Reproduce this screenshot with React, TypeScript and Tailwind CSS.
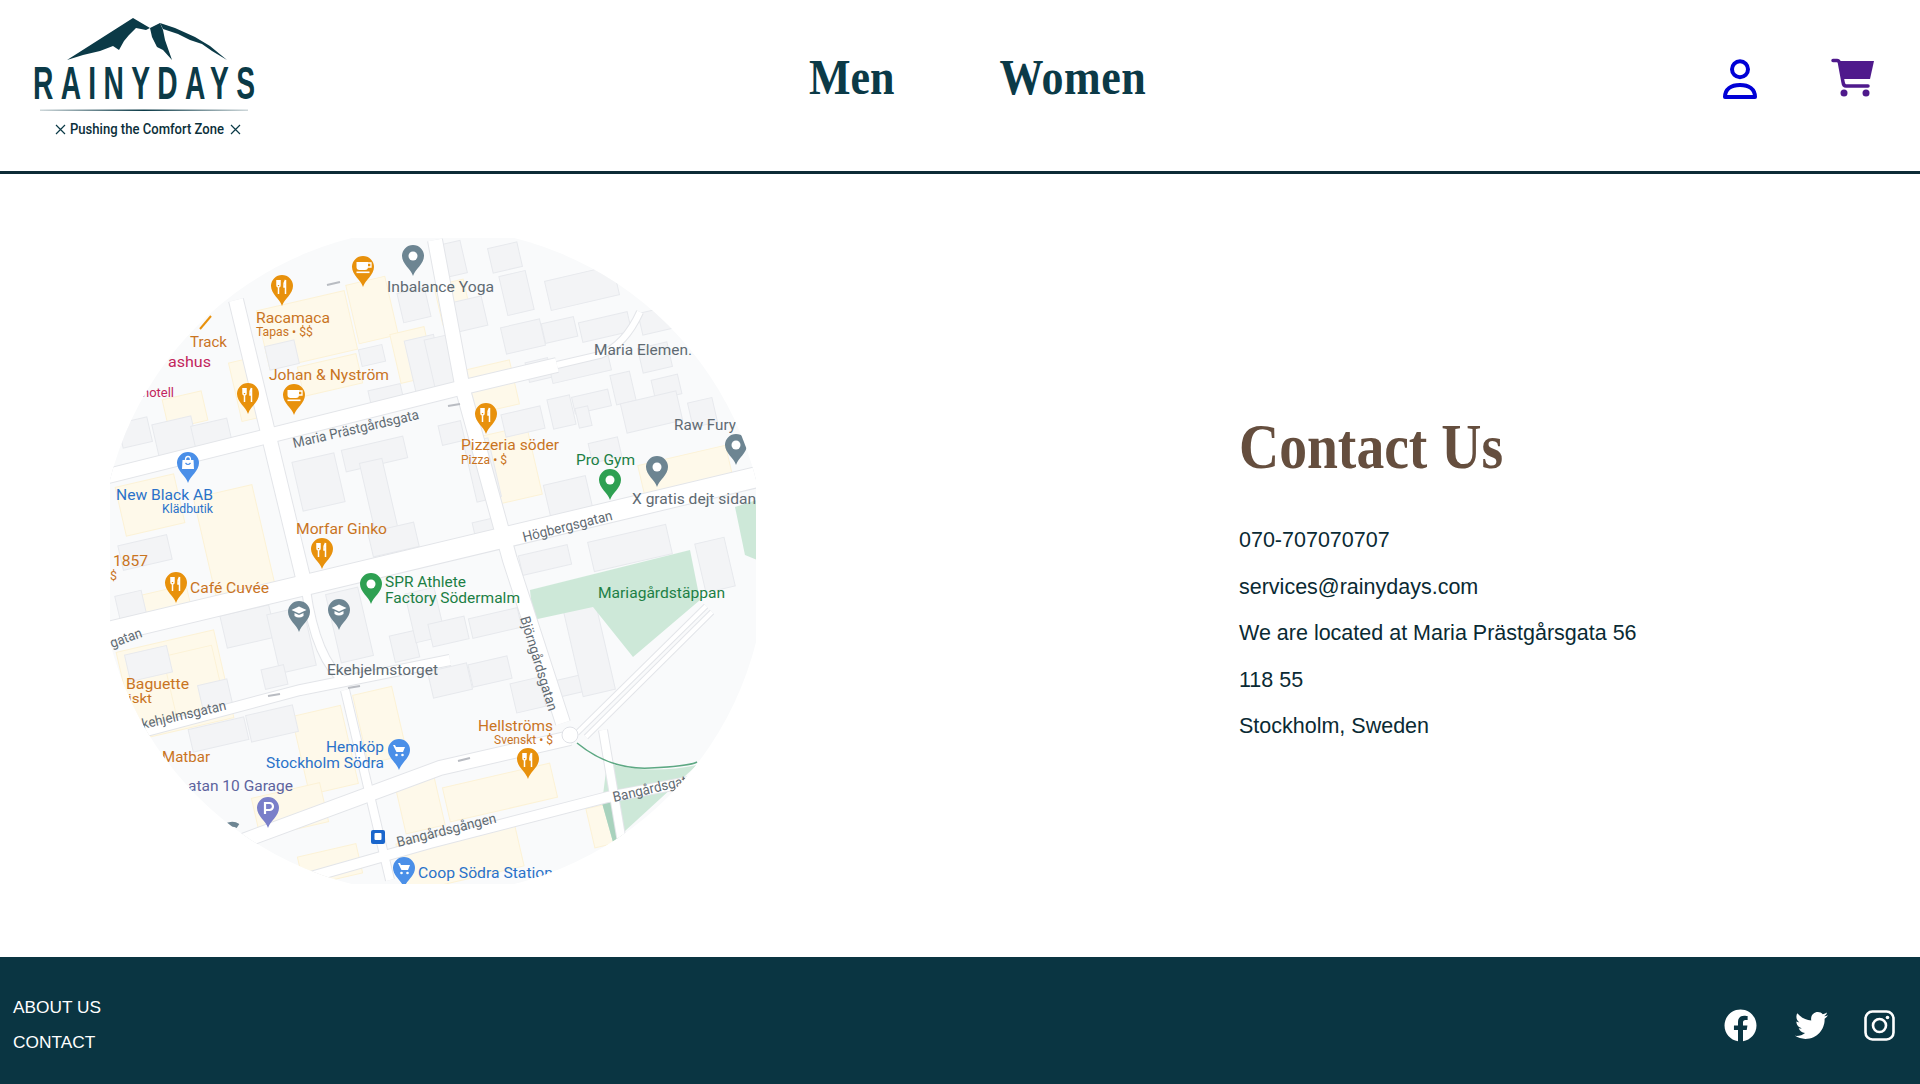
import { FaFacebook, FaTwitter } from 'react-icons/fa';

const ORANGE = '#c9741f';
const GREY = '#5f6a72';
const BLUE = '#2a72c9';
const GREEN = '#1c7f45';
const PINK = '#c2255c';

// [x, y, w, h], each turned -13deg around its own centre
const yellow = [
  [262, 300, 90, 60], [352, 280, 40, 60], [300, 360, 60, 30], [395, 330, 35, 50], [438, 282, 30, 40],
  [465, 365, 50, 45], [490, 430, 45, 70], [120, 480, 60, 50], [205, 490, 60, 110], [140, 590, 50, 30],
  [125, 640, 100, 90], [170, 650, 50, 70], [300, 710, 50, 80], [360, 690, 40, 70], [255, 790, 70, 40],
  [400, 780, 40, 50], [445, 775, 110, 35], [400, 830, 120, 50], [590, 805, 30, 40], [640, 455, 90, 30], [300, 850, 60, 30],
  [165, 395, 40, 30], [235, 360, 20, 60],
];
const buildings = [
  [267, 343, 30, 24], [155, 420, 40, 33], [193, 422, 37, 25], [297, 457, 43, 50], [343, 443, 63, 22],
  [367, 460, 23, 70], [370, 527, 47, 25], [370, 387, 33, 22], [410, 337, 30, 55], [360, 347, 24, 17],
  [430, 337, 22, 55], [437, 243, 27, 33], [503, 273, 27, 40], [547, 273, 70, 30], [503, 323, 40, 27],
  [543, 320, 33, 20], [580, 317, 50, 20], [527, 360, 23, 20], [550, 357, 60, 20], [613, 373, 20, 30],
  [653, 377, 27, 20], [623, 397, 57, 30], [503, 410, 40, 23], [550, 397, 23, 30], [573, 393, 37, 17],
  [577, 407, 13, 20], [547, 480, 43, 37], [440, 423, 23, 20], [590, 533, 80, 30], [520, 550, 50, 20],
  [223, 610, 50, 33], [273, 610, 37, 60], [127, 650, 43, 27], [117, 593, 27, 23], [263, 667, 23, 20],
  [190, 723, 57, 23], [248, 710, 48, 27], [333, 590, 33, 70], [392, 633, 25, 27], [410, 590, 30, 50],
  [430, 620, 37, 23], [470, 613, 50, 20], [470, 660, 40, 23], [430, 667, 40, 27], [513, 680, 30, 30],
  [557, 677, 30, 17], [573, 607, 33, 87], [700, 540, 30, 50], [470, 440, 25, 60], [120, 540, 50, 25],
  [445, 300, 40, 30], [490, 245, 30, 25], [640, 345, 30, 25], [690, 400, 25, 25], [590, 440, 30, 20],
  [475, 520, 22, 28], [120, 420, 30, 25], [200, 682, 30, 25], [400, 290, 28, 30], [640, 310, 30, 22],
];
const roads = [
  { d: 'M100 478 L460 388 L557 365', w: 14 },
  { d: 'M557 365 L600 355 Q625 345 640 312', w: 6 },
  { d: 'M236 300 L306 590', w: 14 },
  { d: 'M435 240 L463 390 L510 560 L563 723', w: 14 },
  { d: 'M100 634 L770 474', w: 20 },
  { d: 'M120 738 L300 690 L450 660', w: 10 },
  { d: 'M240 842 L440 768 L570 738', w: 14 },
  { d: 'M300 880 L430 843 L608 797 L700 780', w: 10 },
  { d: 'M577 733 L706 606', w: 4 },
  { d: 'M586 737 L712 612', w: 4 },
  { d: 'M603 730 L625 860', w: 8 },
  { d: 'M345 690 L390 880', w: 8 },
  { d: 'M306 590 Q316 660 345 682', w: 8 },
];

type Label = { t: string; x: number; y: number; w: number; c: string; s?: number; r?: number };
const labels: Label[] = [
  { t: 'Inbalance Yoga', x: 387, y: 292, w: 107, c: GREY },
  { t: 'Racamaca', x: 256, y: 323, w: 74, c: ORANGE },
  { t: 'Tapas • $$', x: 256, y: 336, w: 57, c: ORANGE, s: 12 },
  { t: 'Track', x: 190, y: 347, w: 37, c: ORANGE },
  { t: 'ashus', x: 168, y: 367, w: 43, c: PINK },
  { t: 'hotell', x: 142, y: 397, w: 32, c: PINK, s: 12 },
  { t: 'Johan & Nyström', x: 269, y: 380, w: 120, c: ORANGE },
  { t: 'New Black AB', x: 116, y: 500, w: 97, c: BLUE },
  { t: 'Klädbutik', x: 162, y: 513, w: 51, c: BLUE, s: 12 },
  { t: 'Morfar Ginko', x: 296, y: 534, w: 91, c: ORANGE },
  { t: '1857', x: 113, y: 566, w: 35, c: ORANGE },
  { t: '$', x: 110, y: 580, w: 7, c: ORANGE, s: 12 },
  { t: 'Maria Elemen.', x: 594, y: 355, w: 98, c: GREY },
  { t: 'Raw Fury', x: 674, y: 430, w: 62, c: GREY },
  { t: 'Pizzeria söder', x: 461, y: 450, w: 98, c: ORANGE },
  { t: 'Pizza • $', x: 461, y: 464, w: 46, c: ORANGE, s: 12 },
  { t: 'Pro Gym', x: 576, y: 465, w: 59, c: GREEN },
  { t: 'X gratis dejt sidan', x: 632, y: 504, w: 124, c: GREY },
  { t: 'Café Cuvée', x: 190, y: 593, w: 79, c: ORANGE },
  { t: 'SPR Athlete', x: 385, y: 587, w: 81, c: GREEN },
  { t: 'Factory Södermalm', x: 385, y: 603, w: 135, c: GREEN },
  { t: 'Baguette', x: 126, y: 689, w: 63, c: ORANGE },
  { t: 'iskt', x: 128, y: 703, w: 24, c: ORANGE, s: 12 },
  { t: 'Ekehjelmstorget', x: 327, y: 675, w: 111, c: GREY },
  { t: 'Matbar', x: 162, y: 762, w: 48, c: ORANGE },
  { t: 'Hemköp', x: 326, y: 752, w: 58, c: BLUE },
  { t: 'Stockholm Södra', x: 266, y: 768, w: 118, c: BLUE },
  { t: 'atan 10 Garage', x: 188, y: 791, w: 105, c: '#5d639e' },
  { t: 'Coop Södra Station', x: 418, y: 878, w: 135, c: BLUE },
  { t: 'Mariagårdstäppan', x: 598, y: 598, w: 127, c: GREEN },
  { t: 'Hellströms', x: 478, y: 731, w: 75, c: ORANGE },
  { t: 'Svenskt • $', x: 494, y: 744, w: 59, c: ORANGE, s: 12 },
  { t: 'Maria Prästgårdsgata', x: 294, y: 448, w: 129, c: GREY, s: 14, r: -13 },
  { t: 'Högbergsgatan', x: 524, y: 542, w: 92, c: GREY, s: 14, r: -14 },
  { t: 'gatan', x: 112, y: 648, w: 33, c: GREY, s: 14, r: -20 },
  { t: 'kehjelmsgatan', x: 143, y: 729, w: 86, c: GREY, s: 14, r: -13 },
  { t: 'Bangårdsgången', x: 398, y: 847, w: 102, c: GREY, s: 14, r: -14 },
  { t: 'Björngårdsgatan', x: 520, y: 618, w: 98, c: GREY, s: 14, r: 73 },
  { t: 'Bangårdsgatan', x: 614, y: 802, w: 90, c: GREY, s: 14, r: -13 },
];

const pinColor = { orange: '#e8910c', grey: '#6d8592', green: '#2ea052', blue: '#4a8fe8', purple: '#7a7fc9' };

function Pin({ x, y, color, glyph }: { x: number; y: number; color: string; glyph: string }) {
  return (
    <g transform={`translate(${x} ${y})`}>
      <path d="M0 31 C-2 24 -11 19 -11 11 A11 11 0 0 1 11 11 C11 19 2 24 0 31Z" fill={color} />
      {glyph === 'dot' && <circle cx="0" cy="11" r="4.5" fill="#fff" />}
      {glyph === 'fork' && (
        <path d="M-5 5 V10 Q-5 12 -3.5 12 V19 M-3.5 5 V10 M-2 5 V10 Q-2 12 -3.5 12 M3.5 5 Q1.5 8 2 12 H3.5 V19 M3.5 5 V12" fill="none" stroke="#fff" strokeWidth="1.5" />
      )}
      {glyph === 'cup' && (
        <g fill="#fff">
          <path d="M-6.5 6 H5 V11 Q5 14 2 14 H-3.5 Q-6.5 14 -6.5 11Z" />
          <path d="M5 7 H8 V11 H5" fill="none" stroke="#fff" strokeWidth="1.3" />
          <rect x="-6.5" y="15.5" width="13" height="1.6" />
        </g>
      )}
      {glyph === 'cart' && (
        <g fill="#fff">
          <path d="M-6 6 H-4 L-3 8 H6 L4 13 H-2.5 Z" />
          <circle cx="-2.5" cy="16" r="1.3" />
          <circle cx="3.5" cy="16" r="1.3" />
        </g>
      )}
      {glyph === 'bag' && (
        <g>
          <path d="M-5.5 8 H5.5 L6 17 H-6Z" fill="#fff" />
          <path d="M-2.5 8 Q-2.5 4.5 0 4.5 T2.5 8" fill="none" stroke="#fff" strokeWidth="1.3" />
          <path d="M-2.5 11 Q0 14 2.5 11" fill="none" stroke={color} strokeWidth="1.2" />
        </g>
      )}
      {glyph === 'cap' && (
        <g fill="#fff">
          <path d="M-7.5 9 L0 5.5 L7.5 9 L0 12.5Z" />
          <path d="M-4.5 12 L0 14 L4.5 12 V15 Q0 18 -4.5 15Z" />
        </g>
      )}
      {glyph === 'P' && (
        <path d="M-3 17 V6 H1.5 A3.3 3.3 0 0 1 1.5 13 H-3" fill="none" stroke="#fff" strokeWidth="2.2" />
      )}
    </g>
  );
}

function MapPicture() {
  return (
    <svg viewBox="110 238 646 646" className="w-[646px] h-[646px] block">
      <defs>
        <clipPath id="round-map">
          <circle cx="433" cy="561" r="333" />
        </clipPath>
      </defs>
      <g clipPath="url(#round-map)">
        <rect x="100" y="220" width="670" height="680" fill="#f9fafb" />
        {yellow.map(([x, y, w, h], i) => (
          <rect key={i} x={x} y={y} width={w} height={h} fill="#fef9ea" stroke="#fcf2d6" transform={`rotate(-13 ${x + w / 2} ${y + h / 2})`} />
        ))}
        {buildings.map(([x, y, w, h], i) => (
          <rect key={i} x={x} y={y} width={w} height={h} fill="#f3f4f6" stroke="#e7e9ed" transform={`rotate(-13 ${x + w / 2} ${y + h / 2})`} />
        ))}
        <path d="M530 590 L690 550 L700 600 L633 657 L593 607 L533 620Z" fill="#cde8d8" />
        <path d="M735 507 L757 500 L757 560 L745 555Z" fill="#cde8d8" />
        <path d="M607 763 Q650 775 697 765 L613 842 L602 803Z" fill="#cde8d8" />
        <path d="M602 803 L615 802 L622 835 L613 842Z" fill="#a8d2bd" />
        {roads.map((r, i) => (
          <path key={i} d={r.d} fill="none" stroke="#e3e5e9" strokeWidth={r.w + 2} />
        ))}
        {roads.map((r, i) => (
          <path key={i} d={r.d} fill="none" stroke="#fff" strokeWidth={r.w} />
        ))}
        <circle cx="570" cy="735" r="8" fill="#fff" stroke="#dfe1e6" />
        <path d="M577 743 Q610 770 650 768 T697 762" fill="none" stroke="#5da883" strokeWidth="1.5" />
        <g stroke="#b9bcc2" strokeWidth="2" fill="none">
          <path d="M327 285 L340 282" />
          <path d="M448 406 L460 404" />
          <path d="M268 696 L280 694" />
          <path d="M348 688 L360 686" />
          <path d="M458 761 L470 758" />
        </g>
        <path d="M200 329 L211 316" stroke="#e8910c" strokeWidth="2" fill="none" />
        <g className="font-['Roboto',sans-serif]">
          {labels.map((l) => (
            <text
              key={l.t}
              x={l.x}
              y={l.y}
              fontSize={l.s ?? 15}
              fill={l.c}
              textLength={l.w}
              lengthAdjust="spacingAndGlyphs"
              transform={l.r ? `rotate(${l.r} ${l.x} ${l.y})` : undefined}
            >
              {l.t}
            </text>
          ))}
        </g>
        <Pin x={282} y={275} color={pinColor.orange} glyph="fork" />
        <Pin x={248} y={383} color={pinColor.orange} glyph="fork" />
        <Pin x={486} y={403} color={pinColor.orange} glyph="fork" />
        <Pin x={322} y={538} color={pinColor.orange} glyph="fork" />
        <Pin x={176} y={572} color={pinColor.orange} glyph="fork" />
        <Pin x={528} y={748} color={pinColor.orange} glyph="fork" />
        <Pin x={363} y={256} color={pinColor.orange} glyph="cup" />
        <Pin x={294} y={384} color={pinColor.orange} glyph="cup" />
        <Pin x={413} y={245} color={pinColor.grey} glyph="dot" />
        <Pin x={657} y={456} color={pinColor.grey} glyph="dot" />
        <Pin x={736} y={434} color={pinColor.grey} glyph="dot" />
        <Pin x={610} y={469} color={pinColor.green} glyph="dot" />
        <Pin x={371} y={573} color={pinColor.green} glyph="dot" />
        <Pin x={188} y={452} color={pinColor.blue} glyph="bag" />
        <Pin x={399} y={739} color={pinColor.blue} glyph="cart" />
        <Pin x={404} y={857} color={pinColor.blue} glyph="cart" />
        <Pin x={299} y={601} color={pinColor.grey} glyph="cap" />
        <Pin x={339} y={599} color={pinColor.grey} glyph="cap" />
        <Pin x={268} y={797} color={pinColor.purple} glyph="P" />
        <path d="M224 828 A11 11 0 0 1 238 826" fill="none" stroke="#6d8592" strokeWidth="5" />
        <rect x="371" y="830" width="14" height="14" rx="2" fill="#1a66cc" />
        <rect x="374.5" y="833" width="7" height="7" rx="1" fill="#fff" />
      </g>
    </svg>
  );
}

function Logo() {
  return (
    <svg viewBox="0 0 300 171" className="w-[300px] h-[171px] block">
      <defs>
        <linearGradient id="logo-rule">
          <stop offset="0" stopColor="#0b3a47" stopOpacity="0.2" />
          <stop offset="0.5" stopColor="#0b3a47" />
          <stop offset="1" stopColor="#0b3a47" stopOpacity="0.2" />
        </linearGradient>
      </defs>
      <g fill="#0b3a47">
        <path d="M67 60 L100 39 L133 18 L150 28 L146 30 L136 28 L129 35 L124 41 L119 50 L113 46 L100 51 L83 55Z" />
        <path d="M150 28 L160 23 L163 30 L165 40 L172 60 L163 50 L157 47 L152 37Z" />
        <path d="M160 23 L175 28 L195 37 L210 46 L227 60 L212 51 L202 44 L190 40 L178 34 L163 29Z" />
        {/* squeezed sideways: no condensed face is installed */}
        <text
          transform="translate(33 99) scale(0.6 1)"
          fontSize="47"
          fontWeight="700"
          textLength="370"
          lengthAdjust="spacing"
          className="font-['Liberation_Sans',sans-serif]"
        >
          RAINYDAYS
        </text>
      </g>
      <rect x="40" y="109.5" width="208" height="1.5" fill="url(#logo-rule)" />
      <g stroke="#0b3a47" strokeWidth="1.2">
        <path d="M56 125 L65 134 M65 125 L56 134" />
        <path d="M231 125 L240 134 M240 125 L231 134" />
      </g>
      <text x="70" y="134" fontSize="14" fontWeight="500" fill="#0b2f3a" textLength="154" lengthAdjust="spacingAndGlyphs" className="font-['Roboto',sans-serif]">
        Pushing the Comfort Zone
      </text>
    </svg>
  );
}

export default function App() {
  return (
    <div className="w-full h-[1084px] bg-white flex flex-col font-['Liberation_Sans',sans-serif]">
      <header className="h-[174px] shrink-0 flex items-start border-b-[3px] border-[#0d2b36]">
        <div className="w-[809px] shrink-0">
          <Logo />
        </div>
        <nav className="flex gap-[105px] pt-[50px] font-['Liberation_Serif',serif] font-bold text-[44px] leading-[56px] text-[#0b3a47]">
          <a className="block scale-y-[1.15]">Men</a>
          <a className="block scale-y-[1.15] tracking-[0.5px]">Women</a>
        </nav>
        <div className="ml-auto flex items-start gap-[72px] pr-[44px] pt-[58px]">
          <svg viewBox="0 0 36 42" className="w-[36px] h-[42px]" fill="none" stroke="#0000d6" strokeWidth="4">
            <circle cx="18" cy="11.3" r="8" />
            <path d="M3 39 C3 31 9 27 18 27 S33 31 33 39Z" strokeLinejoin="round" />
          </svg>
          <svg viewBox="0 0 46 40" className="w-[46px] h-[40px]" fill="#4f1a8c">
            <path d="M9 3 H44 L40 21 H13Z" />
            <path d="M3 2.5 H7 Q9 2.5 9.5 5 L13 24 Q13.5 28 16 28 H38" fill="none" stroke="#4f1a8c" strokeWidth="3.5" strokeLinecap="round" />
            <circle cx="14" cy="35" r="3.5" />
            <circle cx="36" cy="35" r="3.5" />
          </svg>
        </div>
      </header>

      <main className="flex-1 flex">
        <div className="w-[1239px] shrink-0 pl-[110px] pt-[64px]">
          <MapPicture />
        </div>
        <div className="pt-[245px] text-[#0a2a33]">
          <h1 className="font-['Liberation_Serif',serif] font-bold text-[55.6px] leading-[56px] text-[#654e3e] scale-y-[1.13] origin-center">
            Contact Us
          </h1>
          <div className="mt-[42px] text-[21.5px] leading-[46.5px]">
            <p>070-707070707</p>
            <p>services@rainydays.com</p>
            <p>We are located at Maria Prästgårsgata 56</p>
            <p>118 55</p>
            <p>Stockholm, Sweden</p>
          </div>
        </div>
      </main>

      <footer className="h-[127px] shrink-0 bg-[#0a3542] flex justify-between text-white">
        <div className="pl-[13px] pt-[33px] text-[17.3px] leading-[35px]">
          <p>ABOUT US</p>
          <p>CONTACT</p>
        </div>
        <div className="flex items-center gap-[38px] pr-[25px] pt-[9px] text-[33px]">
          <FaFacebook />
          <FaTwitter />
          <svg viewBox="0 0 31 31" className="w-[31px] h-[31px] -ml-[2px]" fill="none" stroke="#fff" strokeWidth="2.6">
            <rect x="1.5" y="1.5" width="28" height="28" rx="7" />
            <circle cx="15.5" cy="15.5" r="6.5" />
            <circle cx="23.5" cy="7.5" r="1.8" fill="#fff" stroke="none" />
          </svg>
        </div>
      </footer>
    </div>
  );
}
